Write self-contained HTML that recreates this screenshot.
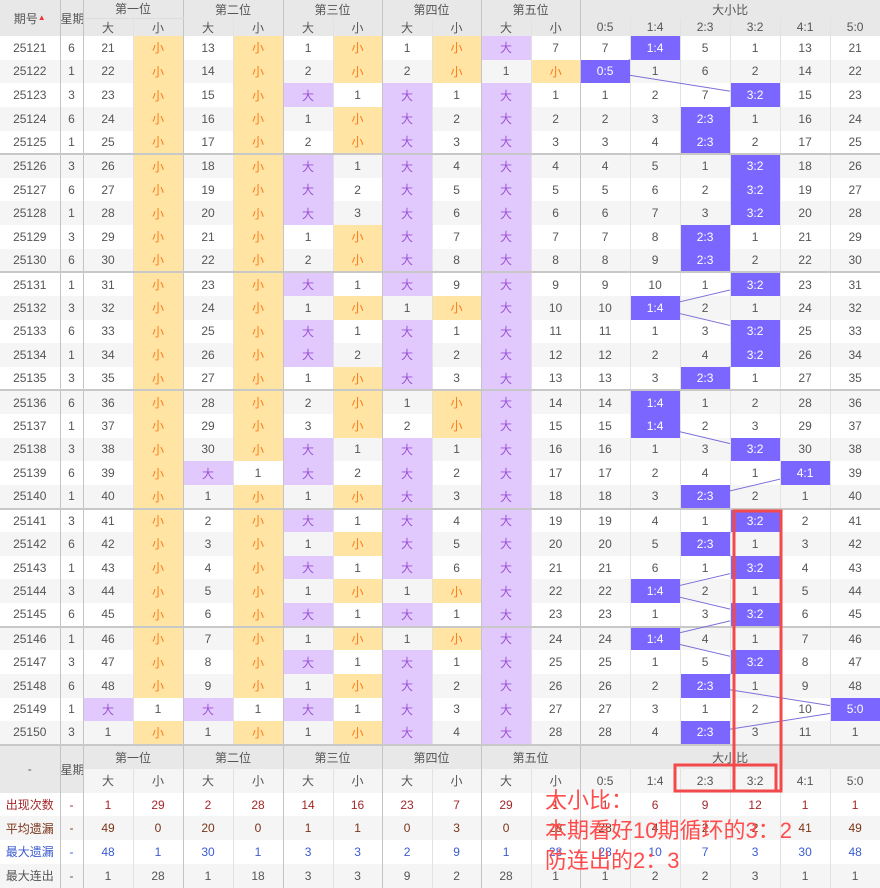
<!DOCTYPE html>
<html><head><meta charset="utf-8"><style>
body{margin:0;width:880px;height:887px;overflow:hidden;background:#fff;position:relative}
table{border-collapse:collapse;table-layout:fixed;width:880px;font:12px "Liberation Sans","Noto Sans CJK SC",sans-serif;color:#555;text-align:center}
td,th{padding:0;border-right:1px solid #e2e2e2;font-weight:normal;overflow:hidden;white-space:nowrap}
tbody tr{height:23.63px}
tbody tr:nth-child(even) td{background:#f5f5f5}
tbody tr td.s{background:#ffe4a3;color:#ff7a1a}
tbody tr td.b{background:#e2c9fd;color:#9c52d6}
tbody tr td.h{background:#7b66ff;color:#fff}
tr.g td{border-top:2px solid #c8c8c8}
.x{border-right:1px solid #c4c4c4}
thead th,.hd td{background:#e8e8e8;color:#555}
thead tr{height:18px}
.st tr{height:23.7px}
.st tr:nth-child(even) td{background:#f5f5f5}
.r td{color:#a4282a}.m td{color:#7a3418}.bl td{color:#3b5bd0}
</style></head><body>
<table>
<colgroup><col style="width:60px"><col style="width:23px"><col style="width:50px"><col style="width:50px"><col style="width:50px"><col style="width:50px"><col style="width:50px"><col style="width:49px"><col style="width:50px"><col style="width:49px"><col style="width:50px"><col style="width:49px"><col style="width:50px"><col style="width:50px"><col style="width:50px"><col style="width:50px"><col style="width:50px"><col style="width:50px"></colgroup>
<thead>
<tr><th rowspan="2" class="x">期号<span style="font-size:8px;color:#e33;position:relative;top:-3px">▲</span></th><th rowspan="2" class="x">星期</th><th colspan="2" class="x" style="border-bottom:1px solid #ddd">第一位</th><th colspan="2" class="x">第二位</th><th colspan="2" class="x">第三位</th><th colspan="2" class="x">第四位</th><th colspan="2" class="x">第五位</th><th colspan="6">大小比</th></tr>
<tr><th>大</th><th class="x">小</th><th>大</th><th class="x">小</th><th>大</th><th class="x">小</th><th>大</th><th class="x">小</th><th>大</th><th class="x">小</th><th>0:5</th><th>1:4</th><th>2:3</th><th>3:2</th><th>4:1</th><th>5:0</th></tr>
</thead>
<tbody>
<tr><td class="x">25121</td><td class="x">6</td><td>21</td><td class="s x">小</td><td>13</td><td class="s x">小</td><td>1</td><td class="s x">小</td><td>1</td><td class="s x">小</td><td class="b">大</td><td class="x">7</td><td>7</td><td class="h">1:4</td><td>5</td><td>1</td><td>13</td><td>21</td></tr>
<tr><td class="x">25122</td><td class="x">1</td><td>22</td><td class="s x">小</td><td>14</td><td class="s x">小</td><td>2</td><td class="s x">小</td><td>2</td><td class="s x">小</td><td>1</td><td class="s x">小</td><td class="h">0:5</td><td>1</td><td>6</td><td>2</td><td>14</td><td>22</td></tr>
<tr><td class="x">25123</td><td class="x">3</td><td>23</td><td class="s x">小</td><td>15</td><td class="s x">小</td><td class="b">大</td><td class="x">1</td><td class="b">大</td><td class="x">1</td><td class="b">大</td><td class="x">1</td><td>1</td><td>2</td><td>7</td><td class="h">3:2</td><td>15</td><td>23</td></tr>
<tr><td class="x">25124</td><td class="x">6</td><td>24</td><td class="s x">小</td><td>16</td><td class="s x">小</td><td>1</td><td class="s x">小</td><td class="b">大</td><td class="x">2</td><td class="b">大</td><td class="x">2</td><td>2</td><td>3</td><td class="h">2:3</td><td>1</td><td>16</td><td>24</td></tr>
<tr><td class="x">25125</td><td class="x">1</td><td>25</td><td class="s x">小</td><td>17</td><td class="s x">小</td><td>2</td><td class="s x">小</td><td class="b">大</td><td class="x">3</td><td class="b">大</td><td class="x">3</td><td>3</td><td>4</td><td class="h">2:3</td><td>2</td><td>17</td><td>25</td></tr>
<tr class="g"><td class="x">25126</td><td class="x">3</td><td>26</td><td class="s x">小</td><td>18</td><td class="s x">小</td><td class="b">大</td><td class="x">1</td><td class="b">大</td><td class="x">4</td><td class="b">大</td><td class="x">4</td><td>4</td><td>5</td><td>1</td><td class="h">3:2</td><td>18</td><td>26</td></tr>
<tr><td class="x">25127</td><td class="x">6</td><td>27</td><td class="s x">小</td><td>19</td><td class="s x">小</td><td class="b">大</td><td class="x">2</td><td class="b">大</td><td class="x">5</td><td class="b">大</td><td class="x">5</td><td>5</td><td>6</td><td>2</td><td class="h">3:2</td><td>19</td><td>27</td></tr>
<tr><td class="x">25128</td><td class="x">1</td><td>28</td><td class="s x">小</td><td>20</td><td class="s x">小</td><td class="b">大</td><td class="x">3</td><td class="b">大</td><td class="x">6</td><td class="b">大</td><td class="x">6</td><td>6</td><td>7</td><td>3</td><td class="h">3:2</td><td>20</td><td>28</td></tr>
<tr><td class="x">25129</td><td class="x">3</td><td>29</td><td class="s x">小</td><td>21</td><td class="s x">小</td><td>1</td><td class="s x">小</td><td class="b">大</td><td class="x">7</td><td class="b">大</td><td class="x">7</td><td>7</td><td>8</td><td class="h">2:3</td><td>1</td><td>21</td><td>29</td></tr>
<tr><td class="x">25130</td><td class="x">6</td><td>30</td><td class="s x">小</td><td>22</td><td class="s x">小</td><td>2</td><td class="s x">小</td><td class="b">大</td><td class="x">8</td><td class="b">大</td><td class="x">8</td><td>8</td><td>9</td><td class="h">2:3</td><td>2</td><td>22</td><td>30</td></tr>
<tr class="g"><td class="x">25131</td><td class="x">1</td><td>31</td><td class="s x">小</td><td>23</td><td class="s x">小</td><td class="b">大</td><td class="x">1</td><td class="b">大</td><td class="x">9</td><td class="b">大</td><td class="x">9</td><td>9</td><td>10</td><td>1</td><td class="h">3:2</td><td>23</td><td>31</td></tr>
<tr><td class="x">25132</td><td class="x">3</td><td>32</td><td class="s x">小</td><td>24</td><td class="s x">小</td><td>1</td><td class="s x">小</td><td>1</td><td class="s x">小</td><td class="b">大</td><td class="x">10</td><td>10</td><td class="h">1:4</td><td>2</td><td>1</td><td>24</td><td>32</td></tr>
<tr><td class="x">25133</td><td class="x">6</td><td>33</td><td class="s x">小</td><td>25</td><td class="s x">小</td><td class="b">大</td><td class="x">1</td><td class="b">大</td><td class="x">1</td><td class="b">大</td><td class="x">11</td><td>11</td><td>1</td><td>3</td><td class="h">3:2</td><td>25</td><td>33</td></tr>
<tr><td class="x">25134</td><td class="x">1</td><td>34</td><td class="s x">小</td><td>26</td><td class="s x">小</td><td class="b">大</td><td class="x">2</td><td class="b">大</td><td class="x">2</td><td class="b">大</td><td class="x">12</td><td>12</td><td>2</td><td>4</td><td class="h">3:2</td><td>26</td><td>34</td></tr>
<tr><td class="x">25135</td><td class="x">3</td><td>35</td><td class="s x">小</td><td>27</td><td class="s x">小</td><td>1</td><td class="s x">小</td><td class="b">大</td><td class="x">3</td><td class="b">大</td><td class="x">13</td><td>13</td><td>3</td><td class="h">2:3</td><td>1</td><td>27</td><td>35</td></tr>
<tr class="g"><td class="x">25136</td><td class="x">6</td><td>36</td><td class="s x">小</td><td>28</td><td class="s x">小</td><td>2</td><td class="s x">小</td><td>1</td><td class="s x">小</td><td class="b">大</td><td class="x">14</td><td>14</td><td class="h">1:4</td><td>1</td><td>2</td><td>28</td><td>36</td></tr>
<tr><td class="x">25137</td><td class="x">1</td><td>37</td><td class="s x">小</td><td>29</td><td class="s x">小</td><td>3</td><td class="s x">小</td><td>2</td><td class="s x">小</td><td class="b">大</td><td class="x">15</td><td>15</td><td class="h">1:4</td><td>2</td><td>3</td><td>29</td><td>37</td></tr>
<tr><td class="x">25138</td><td class="x">3</td><td>38</td><td class="s x">小</td><td>30</td><td class="s x">小</td><td class="b">大</td><td class="x">1</td><td class="b">大</td><td class="x">1</td><td class="b">大</td><td class="x">16</td><td>16</td><td>1</td><td>3</td><td class="h">3:2</td><td>30</td><td>38</td></tr>
<tr><td class="x">25139</td><td class="x">6</td><td>39</td><td class="s x">小</td><td class="b">大</td><td class="x">1</td><td class="b">大</td><td class="x">2</td><td class="b">大</td><td class="x">2</td><td class="b">大</td><td class="x">17</td><td>17</td><td>2</td><td>4</td><td>1</td><td class="h">4:1</td><td>39</td></tr>
<tr><td class="x">25140</td><td class="x">1</td><td>40</td><td class="s x">小</td><td>1</td><td class="s x">小</td><td>1</td><td class="s x">小</td><td class="b">大</td><td class="x">3</td><td class="b">大</td><td class="x">18</td><td>18</td><td>3</td><td class="h">2:3</td><td>2</td><td>1</td><td>40</td></tr>
<tr class="g"><td class="x">25141</td><td class="x">3</td><td>41</td><td class="s x">小</td><td>2</td><td class="s x">小</td><td class="b">大</td><td class="x">1</td><td class="b">大</td><td class="x">4</td><td class="b">大</td><td class="x">19</td><td>19</td><td>4</td><td>1</td><td class="h">3:2</td><td>2</td><td>41</td></tr>
<tr><td class="x">25142</td><td class="x">6</td><td>42</td><td class="s x">小</td><td>3</td><td class="s x">小</td><td>1</td><td class="s x">小</td><td class="b">大</td><td class="x">5</td><td class="b">大</td><td class="x">20</td><td>20</td><td>5</td><td class="h">2:3</td><td>1</td><td>3</td><td>42</td></tr>
<tr><td class="x">25143</td><td class="x">1</td><td>43</td><td class="s x">小</td><td>4</td><td class="s x">小</td><td class="b">大</td><td class="x">1</td><td class="b">大</td><td class="x">6</td><td class="b">大</td><td class="x">21</td><td>21</td><td>6</td><td>1</td><td class="h">3:2</td><td>4</td><td>43</td></tr>
<tr><td class="x">25144</td><td class="x">3</td><td>44</td><td class="s x">小</td><td>5</td><td class="s x">小</td><td>1</td><td class="s x">小</td><td>1</td><td class="s x">小</td><td class="b">大</td><td class="x">22</td><td>22</td><td class="h">1:4</td><td>2</td><td>1</td><td>5</td><td>44</td></tr>
<tr><td class="x">25145</td><td class="x">6</td><td>45</td><td class="s x">小</td><td>6</td><td class="s x">小</td><td class="b">大</td><td class="x">1</td><td class="b">大</td><td class="x">1</td><td class="b">大</td><td class="x">23</td><td>23</td><td>1</td><td>3</td><td class="h">3:2</td><td>6</td><td>45</td></tr>
<tr class="g"><td class="x">25146</td><td class="x">1</td><td>46</td><td class="s x">小</td><td>7</td><td class="s x">小</td><td>1</td><td class="s x">小</td><td>1</td><td class="s x">小</td><td class="b">大</td><td class="x">24</td><td>24</td><td class="h">1:4</td><td>4</td><td>1</td><td>7</td><td>46</td></tr>
<tr><td class="x">25147</td><td class="x">3</td><td>47</td><td class="s x">小</td><td>8</td><td class="s x">小</td><td class="b">大</td><td class="x">1</td><td class="b">大</td><td class="x">1</td><td class="b">大</td><td class="x">25</td><td>25</td><td>1</td><td>5</td><td class="h">3:2</td><td>8</td><td>47</td></tr>
<tr><td class="x">25148</td><td class="x">6</td><td>48</td><td class="s x">小</td><td>9</td><td class="s x">小</td><td>1</td><td class="s x">小</td><td class="b">大</td><td class="x">2</td><td class="b">大</td><td class="x">26</td><td>26</td><td>2</td><td class="h">2:3</td><td>1</td><td>9</td><td>48</td></tr>
<tr><td class="x">25149</td><td class="x">1</td><td class="b">大</td><td class="x">1</td><td class="b">大</td><td class="x">1</td><td class="b">大</td><td class="x">1</td><td class="b">大</td><td class="x">3</td><td class="b">大</td><td class="x">27</td><td>27</td><td>3</td><td>1</td><td>2</td><td>10</td><td class="h">5:0</td></tr>
<tr><td class="x">25150</td><td class="x">3</td><td>1</td><td class="s x">小</td><td>1</td><td class="s x">小</td><td>1</td><td class="s x">小</td><td class="b">大</td><td class="x">4</td><td class="b">大</td><td class="x">28</td><td>28</td><td>4</td><td class="h">2:3</td><td>3</td><td>11</td><td>1</td></tr>
</tbody>
<tbody class="st">
<tr class="hd" style="height:24px"><td rowspan="2" class="x" style="border-top:2px solid #c8c8c8">-</td><td rowspan="2" class="x" style="border-top:2px solid #c8c8c8">星期</td><td colspan="2" class="x" style="border-top:2px solid #c8c8c8">第一位</td><td colspan="2" class="x" style="border-top:2px solid #c8c8c8">第二位</td><td colspan="2" class="x" style="border-top:2px solid #c8c8c8">第三位</td><td colspan="2" class="x" style="border-top:2px solid #c8c8c8">第四位</td><td colspan="2" class="x" style="border-top:2px solid #c8c8c8">第五位</td><td colspan="6" style="border-top:2px solid #c8c8c8">大小比</td></tr>
<tr class="hd" style="height:24px"><td>大</td><td class="x">小</td><td>大</td><td class="x">小</td><td>大</td><td class="x">小</td><td>大</td><td class="x">小</td><td>大</td><td class="x">小</td><td>0:5</td><td>1:4</td><td>2:3</td><td>3:2</td><td>4:1</td><td>5:0</td></tr>
<tr class="r"><td class="x">出现次数</td><td class="x">-</td><td>1</td><td class="x">29</td><td>2</td><td class="x">28</td><td>14</td><td class="x">16</td><td>23</td><td class="x">7</td><td>29</td><td class="x">1</td><td>1</td><td>6</td><td>9</td><td>12</td><td>1</td><td>1</td></tr>
<tr class="m"><td class="x">平均遗漏</td><td class="x">-</td><td>49</td><td class="x">0</td><td>20</td><td class="x">0</td><td>1</td><td class="x">1</td><td>0</td><td class="x">3</td><td>0</td><td class="x">28</td><td>28</td><td>4</td><td>2</td><td>2</td><td>41</td><td>49</td></tr>
<tr class="bl"><td class="x">最大遗漏</td><td class="x">-</td><td>48</td><td class="x">1</td><td>30</td><td class="x">1</td><td>3</td><td class="x">3</td><td>2</td><td class="x">9</td><td>1</td><td class="x">28</td><td>28</td><td>10</td><td>7</td><td>3</td><td>30</td><td>48</td></tr>
<tr><td class="x">最大连出</td><td class="x">-</td><td>1</td><td class="x">28</td><td>1</td><td class="x">18</td><td>3</td><td class="x">3</td><td>9</td><td class="x">2</td><td>28</td><td class="x">1</td><td>1</td><td>2</td><td>2</td><td>3</td><td>1</td><td>1</td></tr>
</tbody>
</table>
<svg width="880" height="887" style="position:absolute;left:0;top:0;pointer-events:none">
<defs><mask id="mk"><rect x="0" y="0" width="880" height="887" fill="#fff"/>
<g fill="#000">
<rect x="630" y="36" width="50" height="24"/><rect x="580" y="60" width="50" height="24"/><rect x="730" y="83" width="50" height="24"/><rect x="680" y="107" width="50" height="24"/><rect x="680" y="130" width="50" height="24"/><rect x="730" y="154" width="50" height="24"/><rect x="730" y="178" width="50" height="24"/><rect x="730" y="201" width="50" height="24"/><rect x="680" y="225" width="50" height="24"/><rect x="680" y="249" width="50" height="24"/><rect x="730" y="272" width="50" height="24"/><rect x="630" y="296" width="50" height="24"/><rect x="730" y="320" width="50" height="24"/><rect x="730" y="343" width="50" height="24"/><rect x="680" y="367" width="50" height="24"/><rect x="630" y="390" width="50" height="24"/><rect x="630" y="414" width="50" height="24"/><rect x="730" y="438" width="50" height="24"/><rect x="780" y="461" width="50" height="24"/><rect x="680" y="485" width="50" height="24"/><rect x="730" y="508" width="50" height="24"/><rect x="680" y="532" width="50" height="24"/><rect x="730" y="556" width="50" height="24"/><rect x="630" y="579" width="50" height="24"/><rect x="730" y="603" width="50" height="24"/><rect x="630" y="626" width="50" height="24"/><rect x="730" y="650" width="50" height="24"/><rect x="680" y="674" width="50" height="24"/><rect x="830" y="697" width="50" height="24"/><rect x="680" y="721" width="50" height="24"/>
</g></mask></defs>
<polyline mask="url(#mk)" fill="none" stroke="#7a70d8" stroke-width="1" points="655,47.8 605,71.4 755,95.1 705,118.7 705,142.3 755,166 755,189.6 755,213.2 705,236.9 705,260.5 755,284.1 655,307.7 755,331.4 755,355 705,378.7 655,402.3 655,425.9 755,449.5 805,473.2 705,496.8 755,520.4 705,544.1 755,567.7 655,591.3 755,615 655,638.6 755,662.2 705,685.9 855,709.5 705,733.1"/>
<rect x="734" y="511" width="47" height="280" fill="none" stroke="#f24a4a" stroke-width="3"/>
<rect x="675" y="765" width="101" height="26" fill="none" stroke="#f24a4a" stroke-width="3"/>
</svg>
<div style="position:absolute;left:545px;top:786px;font:22px/30px 'Liberation Sans','Noto Sans CJK SC',sans-serif;color:#ff4d4d">太小比：<br>本期看好10期循环的3：2<br>防连出的2：3</div>
</body></html>
